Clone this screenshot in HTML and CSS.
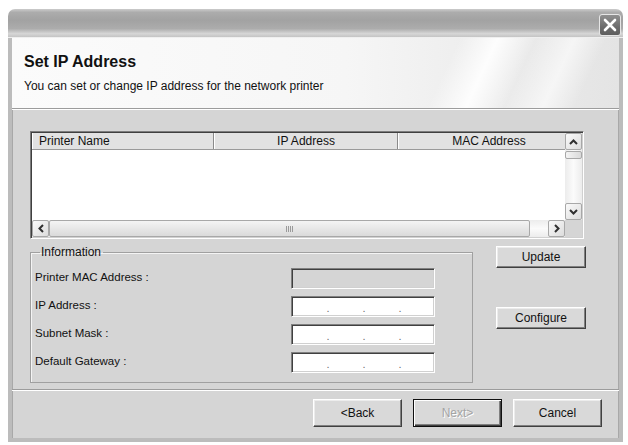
FILE: index.html
```html
<!DOCTYPE html>
<html lang="en">
<head>
    <meta charset="UTF-8">
    <title>Set IP Address</title>
    <link rel="stylesheet" href="styles.css">
</head>
<body>
    <div class="window">
        <div class="titlebar">
            <div class="close-btn">
                <svg width="14" height="14" viewBox="0 0 14 14">
                    <path d="M2 2 L12 12 M12 2 L2 12" stroke="#fff" stroke-width="2.6" stroke-linecap="round"/>
                </svg>
            </div>
        </div>

        <div class="frame">
            <div class="header">
                <div class="header-title">Set IP Address</div>
                <div class="header-desc">You can set or change IP address for the network printer</div>
            </div>

            <div class="content">
                <!-- printer list -->
                <div class="listview">
                    <div class="lv-main">
                        <div class="lv-body">
                            <div class="lv-head">
                                <div class="lv-col col-name">Printer Name</div>
                                <div class="lv-col col-ip">IP Address</div>
                                <div class="lv-col col-mac">MAC Address</div>
                            </div>
                            <div class="lv-rows"></div>
                        </div>
                        <div class="vscroll">
                            <div class="sb-btn">
                                <svg width="9" height="6" viewBox="0 0 9 6"><path d="M1 5 L4.5 1.5 L8 5" fill="none" stroke="#303030" stroke-width="2"/></svg>
                            </div>
                            <div class="sb-thumb-v"></div>
                            <div class="sb-track-v"></div>
                            <div class="sb-btn">
                                <svg width="9" height="6" viewBox="0 0 9 6"><path d="M1 1 L4.5 4.5 L8 1" fill="none" stroke="#303030" stroke-width="2"/></svg>
                            </div>
                        </div>
                    </div>
                    <div class="lv-bottom">
                        <div class="hscroll">
                            <div class="sb-btn">
                                <svg width="6" height="9" viewBox="0 0 6 9"><path d="M5 1 L1.5 4.5 L5 8" fill="none" stroke="#303030" stroke-width="2"/></svg>
                            </div>
                            <div class="sb-thumb-h"><span class="grip"></span></div>
                            <div class="sb-track-h"></div>
                            <div class="sb-btn">
                                <svg width="6" height="9" viewBox="0 0 6 9"><path d="M1 1 L4.5 4.5 L1 8" fill="none" stroke="#303030" stroke-width="2"/></svg>
                            </div>
                        </div>
                        <div class="sb-corner"></div>
                    </div>
                </div>

                <div class="settings">
                    <fieldset class="info-group">
                        <legend>Information</legend>
                        <div class="info-row">
                            <span class="info-label">Printer MAC Address :</span>
                            <span class="field disabled"></span>
                        </div>
                        <div class="info-row">
                            <span class="info-label">IP Address :</span>
                            <span class="field ip-field">
                                <span class="octet"></span><span class="dot">.</span><span class="octet"></span><span class="dot">.</span><span class="octet"></span><span class="dot">.</span><span class="octet"></span>
                            </span>
                        </div>
                        <div class="info-row">
                            <span class="info-label">Subnet Mask :</span>
                            <span class="field ip-field">
                                <span class="octet"></span><span class="dot">.</span><span class="octet"></span><span class="dot">.</span><span class="octet"></span><span class="dot">.</span><span class="octet"></span>
                            </span>
                        </div>
                        <div class="info-row">
                            <span class="info-label">Default Gateway :</span>
                            <span class="field ip-field">
                                <span class="octet"></span><span class="dot">.</span><span class="octet"></span><span class="dot">.</span><span class="octet"></span><span class="dot">.</span><span class="octet"></span>
                            </span>
                        </div>
                    </fieldset>

                    <div class="side-buttons">
                        <button class="btn">Update</button>
                        <button class="btn btn-configure">Configure</button>
                    </div>
                </div>
            </div>

            <div class="footer">
                <button class="btn btn-wizard">&lt;Back</button>
                <button class="btn btn-wizard btn-default" disabled>Next&gt;</button>
                <button class="btn btn-wizard">Cancel</button>
            </div>
        </div>
    </div>
</body>
</html>
```

FILE: styles.css
```css
body {
    margin: 0;
    background: #fff;
    font-family: 'Liberation Sans', Arial, sans-serif;
    color: #111;
}

.window {
    margin: 9px 0 0 8px;
    width: 615px;
    height: 433px;
    display: flex;
    flex-direction: column;
    border-radius: 7px 7px 0 0;
    overflow: hidden;
}

/* title bar */
.titlebar {
    height: 29px;
    flex: none;
    display: flex;
    justify-content: flex-end;
    align-items: flex-start;
    background: linear-gradient(to bottom, #cccccc 0, #acacac 12%, #a2a2a2 40%, #acacac 70%, #d6d6d6 88%, #c4c4c4 100%);
    border-bottom: 1px solid #efefef;
    box-sizing: border-box;
}

.close-btn {
    width: 22px;
    height: 22px;
    margin: 5px 2px 0 0;
    box-sizing: border-box;
    border: 1px solid #e6e6e6;
    border-radius: 3px;
    background: linear-gradient(to bottom, #909090, #6c6c6c 60%, #5e5e5e);
    display: flex;
    align-items: center;
    justify-content: center;
}

.frame {
    flex: 1;
    display: flex;
    flex-direction: column;
    background: #d5d5d5;
    border: 4px solid #bcbcbc;
    border-top: none;
    box-shadow: inset 1px 0 0 #a8a8a8, inset -1px 0 0 #a8a8a8;
}

/* wizard header */
.header {
    height: 71px;
    flex: none;
    box-sizing: border-box;
    padding: 14px 0 0 12px;
    border-bottom: 1px solid #9c9c9c;
    background:
        linear-gradient(115deg, transparent 70%, rgba(255,255,255,0.9) 76%, transparent 82%, rgba(255,255,255,0.6) 88%, transparent 93%),
        linear-gradient(to right, #fbfbfb 0, #f6f6f6 55%, #e4e4e4 100%);
}

.header-title {
    font-size: 16px;
    font-weight: bold;
    line-height: 19px;
}

.header-desc {
    margin-top: 8px;
    font-size: 12px;
    line-height: 14px;
}

.content {
    height: 280px;
    flex: none;
    box-sizing: border-box;
    padding: 22px 0 0 18px;
    box-shadow: inset 0 1px 0 #fff;
}

/* list view */
.listview {
    width: 554px;
    height: 108px;
    box-sizing: border-box;
    border: 1px solid;
    border-color: #7c7c7c #fff #fff #7c7c7c;
    box-shadow: inset 1px 1px 0 #404040, inset -1px -1px 0 #d0d0d0;
    padding: 1px;
    display: flex;
    flex-direction: column;
    background: #fff;
}

.lv-main {
    flex: 1;
    display: flex;
}

.lv-body {
    flex: 1;
    display: flex;
    flex-direction: column;
}

.lv-head {
    height: 17px;
    display: flex;
    background: #e2e2e2;
    border-bottom: 1px solid #9a9a9a;
    box-sizing: border-box;
    font-size: 12px;
    line-height: 16px;
}

.lv-col {
    box-sizing: border-box;
    border-left: 1px solid #fff;
    border-right: 1px solid #8a8a8a;
    white-space: nowrap;
    overflow: hidden;
}

.col-name {
    width: 182px;
    padding-left: 6px;
}

.col-ip {
    width: 184px;
    text-align: center;
}

.col-mac {
    flex: 1;
    padding-left: 14px;
    text-align: center;
    border-right: none;
}

.lv-rows {
    flex: 1;
}

/* scrollbars */
.sb-btn {
    width: 17px;
    height: 17px;
    flex: none;
    box-sizing: border-box;
    border: 1px solid #a8a8a8;
    border-radius: 2px;
    background: linear-gradient(135deg, #fafafa, #dcdcdc);
    display: flex;
    align-items: center;
    justify-content: center;
}

.vscroll {
    width: 17px;
    display: flex;
    flex-direction: column;
    background: linear-gradient(to right, #ececec, #fbfbfb 50%, #ececec);
}

.sb-thumb-v {
    height: 8px;
    margin-top: 1px;
    box-sizing: border-box;
    border: 1px solid #a8a8a8;
    border-radius: 2px;
    background: linear-gradient(to right, #f4f4f4, #dadada);
}

.sb-track-v {
    flex: 1;
}

.lv-bottom {
    height: 17px;
    display: flex;
}

.hscroll {
    flex: 1;
    display: flex;
    background: linear-gradient(to bottom, #ececec, #fbfbfb 50%, #ececec);
}

.sb-thumb-h {
    width: 481px;
    box-sizing: border-box;
    border: 1px solid #a8a8a8;
    border-radius: 2px;
    background: linear-gradient(to bottom, #f4f4f4, #dadada);
    display: flex;
    align-items: center;
    justify-content: center;
}

.grip {
    width: 7px;
    height: 6px;
    background: repeating-linear-gradient(to right, #9a9a9a 0 1px, transparent 1px 2px);
}

.sb-track-h {
    flex: 1;
}

.sb-corner {
    width: 17px;
    background: #d5d5d5;
}

/* information group */
.settings {
    display: flex;
    align-items: flex-start;
    gap: 23px;
    margin-top: 6px;
}

.info-group {
    width: 443px;
    height: 138px;
    box-sizing: border-box;
    margin: 0;
    padding: 9px 0 0 4px;
    border: 1px solid #a0a0a0;
    box-shadow: inset 1px 1px 0 #f4f4f4;
    display: flex;
    flex-direction: column;
    gap: 7px;
}

.info-group legend {
    margin-left: 5px;
    padding: 0 2px 0 1px;
    font-size: 12px;
    line-height: 14px;
}

.info-row {
    display: flex;
    align-items: center;
    font-size: 11.5px;
}

.info-label {
    width: 256px;
    padding-bottom: 4px;
}

.field {
    width: 144px;
    height: 21px;
    box-sizing: border-box;
    border: 1px solid;
    border-color: #808080 #fff #fff #808080;
    box-shadow: inset 1px 1px 0 #404040, inset -1px -1px 0 #d0d0d0;
    background: #fff;
}

.field.disabled {
    background: #d5d5d5;
}

.ip-field {
    display: flex;
    padding: 3px 0 0 2px;
    font-size: 11px;
    color: #707070;
    line-height: 17px;
    overflow: hidden;
}

.octet {
    flex: 1;
}

.dot {
    width: 4px;
    text-align: center;
}

.side-buttons {
    display: flex;
    flex-direction: column;
    gap: 39px;
    margin-top: 1px;
}

/* buttons */
.btn {
    width: 90px;
    height: 22px;
    box-sizing: border-box;
    padding: 0;
    font-family: inherit;
    font-size: 12px;
    color: #111;
    background: #d9d9d9;
    border: 1px solid;
    border-color: #fff #404040 #404040 #fff;
    box-shadow: inset -1px -1px 0 #808080, inset 1px 1px 0 #ececec;
}

.footer {
    flex: 1;
    display: flex;
    justify-content: flex-end;
    gap: 11px;
    padding: 9px 17px 0 0;
    border-top: 1px solid #9c9c9c;
    box-shadow: inset 0 1px 0 #fff;
}

.btn-wizard {
    width: 89px;
    height: 28px;
}

.btn-default {
    border: 1px solid #101010;
    box-shadow: inset 1px 1px 0 #fff, inset -1px -1px 0 #404040, inset -2px -2px 0 #808080;
    color: #a4a4a4;
    text-shadow: 1px 1px 0 #fff;
}
```
